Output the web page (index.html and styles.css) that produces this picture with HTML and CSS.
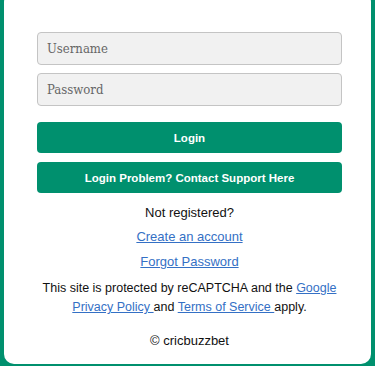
FILE: index.html
```html
<!DOCTYPE html>
<html lang="en">

<head>
    <meta charset="UTF-8">
    <meta name="viewport" content="width=device-width, initial-scale=1.0">
    <title>Login</title>
    <link rel="stylesheet" href="styles.css">
</head>

<body>

    <div class="card">
        <form class="login-form">
            <input type="text" class="form-input" placeholder="Username">
            <input type="password" class="form-input" placeholder="Password">
            <button type="button" class="btn btn-login">Login</button>
            <button type="button" class="btn btn-support">Login Problem? Contact Support Here</button>
        </form>

        <p class="not-registered">Not registered?</p>
        <p class="link-row"><a href="#">Create an account</a></p>
        <p class="link-row"><a href="#">Forgot Password</a></p>

        <p class="recaptcha">This site is protected by reCAPTCHA and the <a href="#">Google Privacy Policy </a>and <a href="#">Terms of Service </a>apply.</p>

        <p class="copyright">&copy; cricbuzzbet</p>
    </div>

</body>

</html>
```

FILE: styles.css
```css
body {
    font-family: "Liberation Sans", Arial, sans-serif;
    margin: 0;
    background-color: #00906e;
    height: 366px;
    overflow: hidden;
}

.card {
    background-color: #fff;
    margin: -8px 4px 0 4px;
    padding: 40px 29px 0 33px;
    height: 332px;
    border-radius: 10px;
    text-align: center;
    color: #111;
}

.login-form {
    display: flex;
    flex-direction: column;
}

.form-input {
    height: 33px;
    box-sizing: border-box;
    margin-bottom: 8px;
    padding: 0 9px;
    border: 1px solid #c4c4c4;
    border-radius: 4px;
    background-color: #f1f1f1;
    font-family: "DejaVu Serif Condensed", "DejaVu Serif", serif;
    font-stretch: condensed;
    font-size: 13px;
}

.form-input::placeholder {
    color: #666;
}

.btn {
    height: 31px;
    border: none;
    border-radius: 4px;
    background-color: #00906e;
    color: #fff;
    font-family: "Liberation Sans", Arial, sans-serif;
    font-weight: bold;
    font-size: 11.5px;
    cursor: pointer;
}

.btn-login {
    margin-top: 8px;
}

.btn-support {
    margin-top: 9px;
}

p {
    margin: 0;
    font-size: 13px;
    line-height: 19px;
}

a {
    color: #3470c5;
}

.not-registered {
    margin-top: 10px;
}

.link-row {
    margin-top: 5px;
}

.link-row + .link-row {
    margin-top: 6px;
}

.recaptcha {
    margin-top: 8px;
    font-size: 12.5px;
}

.copyright {
    margin-top: 14px;
}
```
